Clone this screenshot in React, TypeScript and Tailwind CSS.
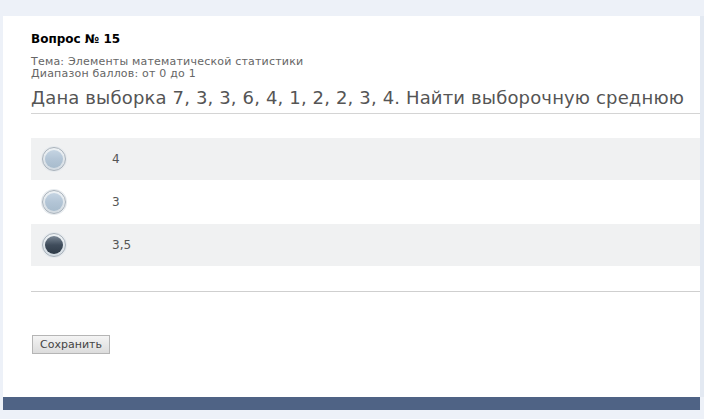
const options = [
  { label: '4', checked: false, shaded: true, h: 'h-[42px]' },
  { label: '3', checked: false, shaded: false, h: 'h-[44px]' },
  { label: '3,5', checked: true, shaded: true, h: 'h-[42px]' },
];

function Radio({ checked }: { checked: boolean }) {
  return (
    <div
      className={
        'w-[24px] h-[24px] rounded-full border border-[#a9b2bb] p-[2px] ' +
        'bg-gradient-to-b from-[#eef2f5] to-[#d3dbe2] shadow-[0_0_0_1px_#e6eaee]'
      }
    >
      <div
        className={
          checked
            ? 'w-full h-full rounded-full bg-gradient-to-b from-[#7b8896] via-[#3f4c5b] to-[#2f3b48]'
            : 'w-full h-full rounded-full bg-gradient-to-b from-[#c5d4e2] via-[#b3c5d6] to-[#a8bccd]'
        }
      />
    </div>
  );
}

export default function App() {
  return (
    <div
      className="w-[704px] h-[419px] bg-[#edf1f8] flex flex-col pt-[16px] overflow-hidden"
      style={{ fontFamily: '"DejaVu Sans", Verdana, sans-serif' }}
    >
      <div className="flex">
        <div className="w-[3px]" />
        <div className="w-[697px] h-[381px] bg-white pl-[28px] flex flex-col">
          {/* Header */}
          <div className="pt-[16px] text-[12px] font-bold text-black leading-[14px]">Вопрос № 15</div>
          <div className="mt-[10px] text-[11px] leading-[12px] text-[#666] tracking-[0.2px]">
            <div>Тема: Элементы математической статистики</div>
            <div>Диапазон баллов: от 0 до 1</div>
          </div>
          <div className="mt-[6px] text-[18px] leading-[24px] text-[#555] tracking-[0.15px] whitespace-nowrap pb-[3px] border-b border-[#d4d4d4]">
            Дана выборка 7, 3, 3, 6, 4, 1, 2, 2, 3, 4. Найти выборочную среднюю
          </div>

          {/* Options */}
          <div className="mt-[24px] flex flex-col">
            {options.map((o) => (
              <div
                key={o.label}
                className={
                  'flex items-center pl-[11px] ' + o.h + ' ' + (o.shaded ? 'bg-[#f0f1f2]' : 'bg-white')
                }
              >
                <Radio checked={o.checked} />
                <span className="ml-[46px] text-[12px] text-[#555]">{o.label}</span>
              </div>
            ))}
          </div>

          <div className="mt-[25px] border-b border-[#cfcfcf]" />

          <div className="mt-[39px]">
            <button className="ml-[1px] w-[78px] h-[19px] border border-[#b5b5b5] bg-gradient-to-b from-[#f4f4f4] to-[#dcdcdc] text-[11px] leading-[17px] text-[#444]">
              Сохранить
            </button>
          </div>
        </div>
        <div className="w-[4px] bg-[#e3e9f2]" />
      </div>
      <div className="flex">
        <div className="w-[3px]" />
        <div className="w-[697px] h-[13px] bg-[#4f6385]" />
      </div>
    </div>
  );
}
